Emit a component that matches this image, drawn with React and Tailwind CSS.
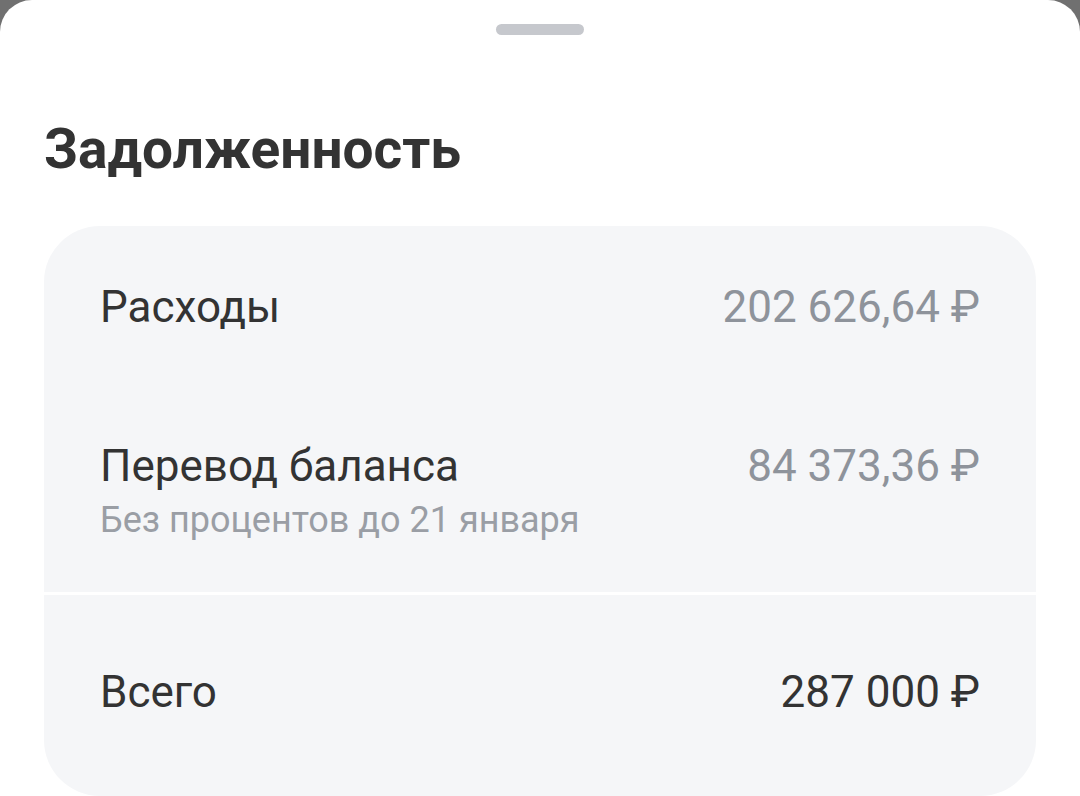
export default function App() {
    const font = { fontFamily: 'Roboto, "Noto Sans", sans-serif' };

    return (
        <div className="w-[1080px] h-[796px] overflow-hidden bg-[#707070]" style={font}>
            <div className="h-full bg-white rounded-t-[32px] flex flex-col">
                {/* drag handle */}
                <div className="flex justify-center pt-[24px]">
                    <div className="w-[88px] h-[11px] rounded-full bg-[#c6c8cd]" />
                </div>

                <h1 className="mt-[82px] px-[44px] text-[55px] leading-[64px] font-bold text-[#333333]">
                    Задолженность
                </h1>

                <div className="mx-[44px] mt-[45px] bg-[#f5f6f8] rounded-[56px] flex-1 flex flex-col overflow-hidden">
                    <div className="px-[56px] pt-[55px] h-[366px]">
                        <div className="flex justify-between items-start">
                            <span className="text-[44px] leading-[52px] text-[#333333]">Расходы</span>
                            <span className="text-[44px] leading-[52px] text-[#8e939b]">202 626,64 ₽</span>
                        </div>
                        <div className="flex justify-between items-start mt-[107px]">
                            <div className="flex flex-col">
                                <span className="text-[44px] leading-[52px] text-[#333333]">Перевод баланса</span>
                                <span className="text-[36px] leading-[44px] text-[#9a9ea5] mt-[6px]">Без процентов до 21 января</span>
                            </div>
                            <span className="text-[44px] leading-[52px] text-[#8e939b]">84 373,36 ₽</span>
                        </div>
                    </div>
                    <div className="h-[3px] bg-white" />
                    <div className="px-[56px] pt-[71px] flex justify-between items-start">
                        <span className="text-[44px] leading-[52px] text-[#333333]">Всего</span>
                        <span className="text-[44px] leading-[52px] text-[#333333]">287 000 ₽</span>
                    </div>
                </div>
            </div>
        </div>
    );
}
